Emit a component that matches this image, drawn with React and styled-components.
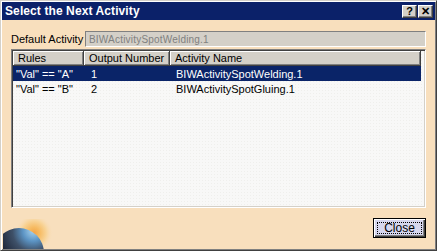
import React from 'react';
import styled, { createGlobalStyle, css } from 'styled-components';

const GlobalStyle = createGlobalStyle`
  html, body {
    margin: 0;
    padding: 0;
    background: #f8dfbd;
  }
  body {
    font-family: "Liberation Sans", Arial, sans-serif;
    font-size: 11px;
  }
`;

const Window = styled.div`
  box-sizing: border-box;
  width: 437px;
  height: 251px;
  display: flex;
  flex-direction: column;
  padding: 1px;
  background-color: #f8dfbd;
  border: 1px solid;
  border-color: #d4d0c8 #404040 #404040 #d4d0c8;
  box-shadow: inset 1px 1px #fff, inset -1px -1px #808080;
`;

const TitleBar = styled.div`
  height: 18px;
  display: flex;
  align-items: center;
  justify-content: space-between;
  padding: 0 2px 0 3px;
  background-color: #0b2169;
  color: #fff;
`;

const Title = styled.span`
  font-weight: bold;
  font-size: 12px;
  letter-spacing: 0.1px;
`;

const CaptionButtons = styled.div`
  display: flex;
  gap: 1px;
`;

const CaptionButton = styled.div`
  box-sizing: border-box;
  width: 15px;
  height: 13px;
  display: flex;
  align-items: center;
  justify-content: center;
  background-color: #d4d0c8;
  color: #000;
  border: 1px solid;
  border-color: #fff #404040 #404040 #fff;
  box-shadow: inset -1px -1px #808080;
  font-weight: bold;
  font-size: 11px;
  line-height: 1;
`;

const Body = styled.div`
  flex: 1;
  display: flex;
  flex-direction: column;
  padding-top: 11px;
`;

const FieldRow = styled.div`
  display: flex;
  align-items: center;
  margin: 0 9px;
  height: 16px;
`;

const Label = styled.span`
  width: 74px;
  color: #000;
  white-space: nowrap;
`;

const ReadOnlyInput = styled.div`
  box-sizing: border-box;
  flex: 1;
  height: 16px;
  display: flex;
  align-items: center;
  padding-left: 3px;
  background-color: #d4d0c8;
  color: #808080;
  font-size: 10px;
  letter-spacing: 0.2px;
  border-top: 1px solid #808080;
  border-left: 1px solid #808080;
  border-right: 1px solid #fff;
  border-bottom: 1px solid #fff;
`;

const Frame = styled.div`
  box-sizing: border-box;
  margin: 2px 9px 0;
  height: 159px;
  border: 1px solid;
  border-color: #808080 #fff #fff #808080;
  box-shadow: inset 1px 1px #404040, inset -1px -1px #d4d0c8;
  padding: 1px;
  background-color: #f8f8f7;
  background-image: radial-gradient(#efefec 0.5px, transparent 0.7px);
  background-size: 3px 3px;
`;

const Grid = styled.div`
  display: grid;
  grid-template-columns: 71px 86px 251px;
`;

const HeaderCell = styled.div`
  box-sizing: border-box;
  height: 15px;
  display: flex;
  align-items: center;
  padding-left: 5px;
  background-color: #d4d0c8;
  color: #000;
  border-right: 1px solid #404040;
  border-bottom: 1px solid #404040;
  box-shadow: inset 1px 1px #fff, inset -1px -1px #808080;
  white-space: nowrap;
  overflow: hidden;
`;

const Cell = styled.div`
  height: 15px;
  display: flex;
  align-items: center;
  padding-left: ${p => p.$pad}px;
  white-space: nowrap;
  overflow: hidden;
  ${p =>
    p.$selected
      ? css`
          background-color: #0a2468;
          color: #fff;
        `
      : css`
          color: #000;
        `}
`;

const Footer = styled.div`
  flex: 1;
  display: flex;
  justify-content: space-between;
  padding: 0 9px 0 1px;
`;

const Logo = styled.svg`
  align-self: flex-end;
  display: block;
`;

const CloseButton = styled.button`
  box-sizing: border-box;
  margin-top: 10px;
  width: 53px;
  height: 20px;
  padding: 0;
  border: 1px solid #000;
  background-color: #d6d6ee;
  box-shadow: inset 1px 1px #fff, inset -1px -1px #404040, inset -2px -2px #808080;
  font-family: "Liberation Sans", Arial, sans-serif;
  font-size: 11px;
  color: #000;
  display: flex;
  align-items: center;
  justify-content: center;
`;

const Focus = styled.span`
  box-sizing: border-box;
  width: 45px;
  height: 12px;
  display: flex;
  align-items: center;
  justify-content: center;
  border: 1px dotted #000;
  font-size: 12px;
`;

const columns = [
  { title: 'Rules', pad: 3 },
  { title: 'Output Number', pad: 7 },
  { title: 'Activity Name', pad: 6 },
];

const rows = [
  { rule: '"Val" == "A"', number: '1', name: 'BIWActivitySpotWelding.1', selected: true },
  { rule: '"Val" == "B"', number: '2', name: 'BIWActivitySpotGluing.1' },
];

const Globe = () => (
  <Logo width="50" height="30" viewBox="0 0 50 30">
    <defs>
      <radialGradient id="glow" cx="31" cy="14" r="19" gradientUnits="userSpaceOnUse">
        <stop offset="0" stopColor="#f3a448" />
        <stop offset="0.3" stopColor="#f6bb62" />
        <stop offset="0.65" stopColor="#f8d498" />
        <stop offset="1" stopColor="#f8dfbd" stopOpacity="0" />
      </radialGradient>
      <radialGradient id="earth" cx="30" cy="12" r="34" gradientUnits="userSpaceOnUse">
        <stop offset="0" stopColor="#a6d2ee" />
        <stop offset="0.3" stopColor="#5c94c4" />
        <stop offset="0.6" stopColor="#3e5068" />
        <stop offset="1" stopColor="#20283a" />
      </radialGradient>
    </defs>
    <rect x="0" y="0" width="50" height="30" fill="url(#glow)" />
    <circle cx="16" cy="34" r="25" fill="url(#earth)" />
  </Logo>
);

const App = () => {
  return (
    <>
      <GlobalStyle />
      <Window>
        <TitleBar>
          <Title>Select the Next Activity</Title>
          <CaptionButtons>
            <CaptionButton>?</CaptionButton>
            <CaptionButton>✕</CaptionButton>
          </CaptionButtons>
        </TitleBar>
        <Body>
          <FieldRow>
            <Label>Default Activity</Label>
            <ReadOnlyInput>BIWActivitySpotWelding.1</ReadOnlyInput>
          </FieldRow>
          <Frame>
            <Grid>
              {columns.map(col => (
                <HeaderCell key={col.title}>{col.title}</HeaderCell>
              ))}
              {rows.map(row =>
                [row.rule, row.number, row.name].map((value, i) => (
                  <Cell
                    key={`${row.number}-${i}`}
                    $pad={columns[i].pad}
                    $selected={row.selected}
                  >
                    {value}
                  </Cell>
                ))
              )}
            </Grid>
          </Frame>
          <Footer>
            <Globe />
            <CloseButton>
              <Focus>Close</Focus>
            </CloseButton>
          </Footer>
        </Body>
      </Window>
    </>
  );
};

export default App;
